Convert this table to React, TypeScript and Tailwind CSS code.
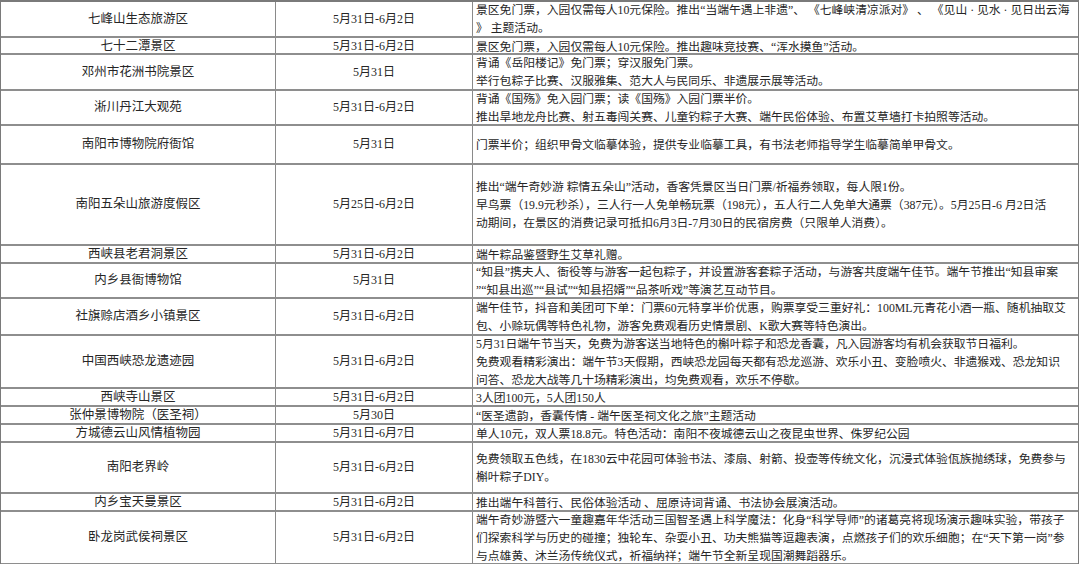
const rows: { name: string; date: string; h: string; lines: string[] }[] = [
  {
    name: "七峰山生态旅游区",
    date: "5月31日-6月2日",
    h: "h-[36px]",
    lines: [
      "景区免门票，入园仅需每人10元保险。推出“当端午遇上非遗”、 《七峰峡清凉派对》 、 《见山 · 见水 · 见日出云海",
      "》 主题活动。",
    ],
  },
  {
    name: "七十二潭景区",
    date: "5月31日-6月2日",
    h: "h-[17px]",
    lines: ["景区免门票，入园仅需每人10元保险。推出趣味竞技赛、“浑水摸鱼”活动。"],
  },
  {
    name: "邓州市花洲书院景区",
    date: "5月31日",
    h: "h-[36px]",
    lines: ["背诵《岳阳楼记》免门票；穿汉服免门票。", "举行包粽子比赛、汉服雅集、范大人与民同乐、非遗展示展等活动。"],
  },
  {
    name: "淅川丹江大观苑",
    date: "5月31日-6月2日",
    h: "h-[35px]",
    lines: [
      "背诵《国殇》免入园门票；读《国殇》入园门票半价。",
      "推出旱地龙舟比赛、射五毒闯关赛、儿童钓粽子大赛、端午民俗体验、布置艾草墙打卡拍照等活动。",
    ],
  },
  {
    name: "南阳市博物院府衙馆",
    date: "5月31日",
    h: "h-[39px]",
    lines: ["门票半价；组织甲骨文临摹体验，提供专业临摹工具，有书法老师指导学生临摹简单甲骨文。"],
  },
  {
    name: "南阳五朵山旅游度假区",
    date: "5月25日-6月2日",
    h: "h-[81px]",
    lines: [
      "推出“端午奇妙游 粽情五朵山”活动，香客凭景区当日门票/祈福券领取，每人限1份。",
      "早鸟票（19.9元秒杀），三人行一人免单畅玩票（198元），五人行二人免单大通票（387元）。5月25日-6 月2日活",
      "动期间，在景区的消费记录可抵扣6月3日-7月30日的民宿房费（只限单人消费）。",
    ],
  },
  {
    name: "西峡县老君洞景区",
    date: "5月31日-6月2日",
    h: "h-[18px]",
    lines: ["端午粽品鉴暨野生艾草礼赠。"],
  },
  {
    name: "内乡县衙博物馆",
    date: "5月31日",
    h: "h-[35px]",
    lines: [
      "“知县”携夫人、衙役等与游客一起包粽子，并设置游客套粽子活动，与游客共度端午佳节。端午节推出“知县审案",
      "”“知县出巡”“县试”“知县招婿”“品茶听戏”等演艺互动节目。",
    ],
  },
  {
    name: "社旗赊店酒乡小镇景区",
    date: "5月31日-6月2日",
    h: "h-[37px]",
    lines: [
      "端午佳节，抖音和美团可下单：门票60元特享半价优惠，购票享受三重好礼：100ML元青花小酒一瓶、随机抽取艾",
      "包、小赊玩偶等特色礼物，游客免费观看历史情景剧、K歌大赛等特色演出。",
    ],
  },
  {
    name: "中国西峡恐龙遗迹园",
    date: "5月31日-6月2日",
    h: "h-[53px]",
    lines: [
      "5月31日端午节当天，免费为游客送当地特色的槲叶粽子和恐龙香囊，凡入园游客均有机会获取节日福利。",
      "免费观看精彩演出：端午节3天假期，西峡恐龙园每天都有恐龙巡游、欢乐小丑、变脸喷火、非遗猴戏、恐龙知识",
      "问答、恐龙大战等几十场精彩演出，均免费观看，欢乐不停歇。",
    ],
  },
  {
    name: "西峡寺山景区",
    date: "5月31日-6月2日",
    h: "h-[18px]",
    lines: ["3人团100元，5人团150人"],
  },
  {
    name: "张仲景博物院（医圣祠）",
    date: "5月30日",
    h: "h-[18px]",
    lines: ["“医圣遗韵，香囊传情 - 端午医圣祠文化之旅”主题活动"],
  },
  {
    name: "方城德云山风情植物园",
    date: "5月31日-6月7日",
    h: "h-[18px]",
    lines: ["单人10元，双人票18.8元。特色活动：南阳不夜城德云山之夜昆虫世界、侏罗纪公园"],
  },
  {
    name: "南阳老界岭",
    date: "5月31日-6月2日",
    h: "h-[51px]",
    lines: [
      "免费领取五色线，在1830云中花园可体验书法、漆扇、射箭、投壶等传统文化，沉浸式体验佤族抛绣球，免费参与",
      "槲叶粽子DIY。",
    ],
  },
  {
    name: "内乡宝天曼景区",
    date: "5月31日-6月2日",
    h: "h-[18px]",
    lines: ["推出端午科普行、民俗体验活动 、屈原诗词背诵、书法协会展演活动。"],
  },
  {
    name: "卧龙岗武侯祠景区",
    date: "5月31日-6月2日",
    h: "h-[53px]",
    lines: [
      "端午奇妙游暨六一童趣嘉年华活动三国智圣遇上科学魔法：化身“科学导师”的诸葛亮将现场演示趣味实验，带孩子",
      "们探索科学与历史的碰撞；独轮车、杂耍小丑、功夫熊猫等逗趣表演，点燃孩子们的欢乐细胞；在“天下第一岗”参",
      "与点雄黄、沐兰汤传统仪式，祈福纳祥；端午节全新呈现国潮舞蹈器乐。",
    ],
  },
];

export default function App() {
  return (
    <div
      className="h-[564px] w-[1080px] overflow-hidden bg-white text-[#262626]"
      style={{ fontFamily: '"Liberation Serif", "Noto Sans CJK SC", serif' }}
    >
      <div className="w-[1079px] border-t-2 border-l border-r border-[#7a7a7a]">
        {rows.map((r) => (
          <div key={r.name} className={`grid grid-cols-[275px_197px_1fr] border-b-2 border-[#8e8e8e] ${r.h}`}>
            <div className="flex items-center justify-center border-r border-[#8a8a8a] text-[12.5px] leading-[17px]">
              {r.name}
            </div>
            <div className="flex items-center justify-center border-r border-[#8a8a8a] text-[12px] leading-[17px]">
              {r.date}
            </div>
            <div className="flex flex-col justify-center overflow-hidden pl-[3px] text-[11.8px] leading-[18px] whitespace-nowrap">
              {r.lines.map((l, i) => (
                <div key={i}>{l}</div>
              ))}
            </div>
          </div>
        ))}
      </div>
    </div>
  );
}
